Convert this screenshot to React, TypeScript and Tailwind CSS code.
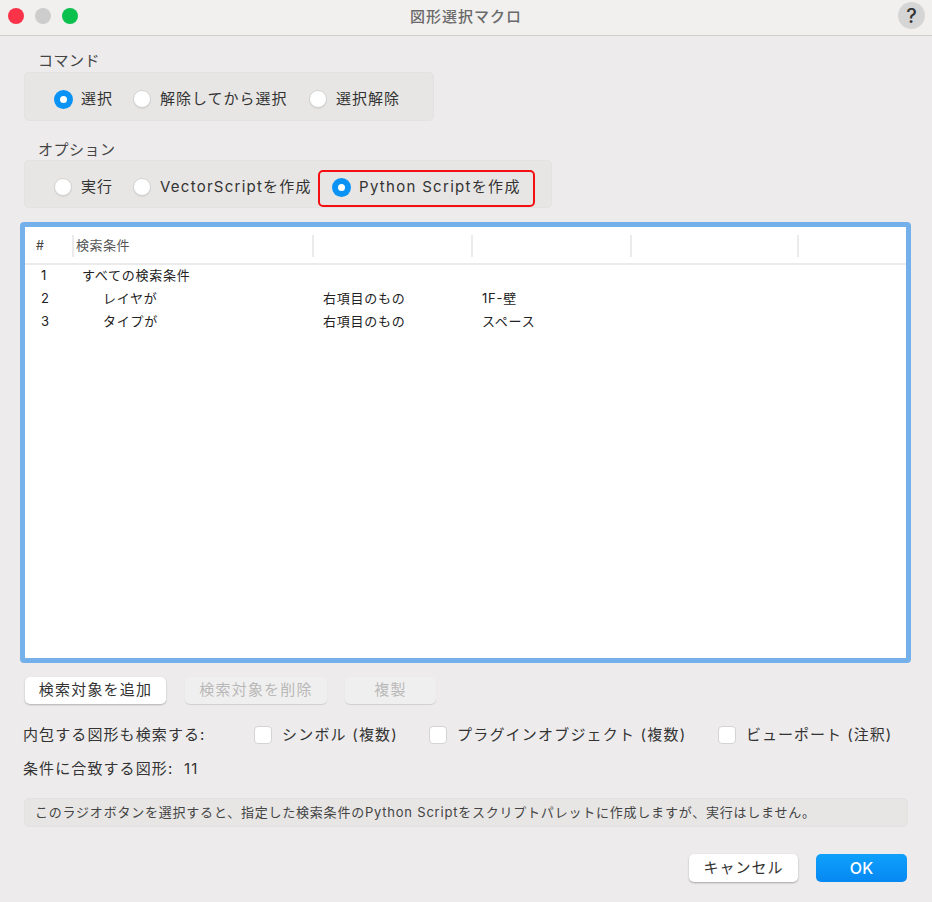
const fontStack = 'font-["Inter","Noto_Sans_CJK_JP",sans-serif]'

function Radio({ label, checked, className = '' }: { label: string; checked?: boolean; className?: string }) {
  return (
    <label className={`flex items-center gap-[8px] text-[15px] leading-5 tracking-[1px] text-[#333] ${className}`}>
      {checked ? (
        <span className="flex h-[19px] w-[19px] shrink-0 items-center justify-center rounded-full bg-[#0a93f5]">
          <span className="h-[7px] w-[7px] rounded-full bg-white" />
        </span>
      ) : (
        <span className="mr-[1px] h-[18px] w-[18px] shrink-0 rounded-full border border-[#d4d3d3] bg-white shadow-[0_1px_1px_rgba(0,0,0,0.08)]" />
      )}
      <span className="whitespace-nowrap">{label}</span>
    </label>
  )
}

function Checkbox({ label, className = '' }: { label: string; className?: string }) {
  return (
    <label className={`flex items-center gap-[10px] text-[15px] leading-5 tracking-[1px] text-[#333] ${className}`}>
      <span className="h-[18px] w-[18px] shrink-0 rounded-[4px] border border-[#d4d3d3] bg-white" />
      <span className="whitespace-nowrap">{label}</span>
    </label>
  )
}

function GroupBox({ children, className = '' }: { children: React.ReactNode; className?: string }) {
  return (
    <div className={`flex items-center rounded-[5px] border border-[#e3e2e2] bg-[#e7e6e5] ${className}`}>{children}</div>
  )
}

function HeaderCell({ label, className = '' }: { label?: string; className?: string }) {
  return (
    <div className={`flex h-[22px] shrink-0 items-center border-l-2 border-[#ebebeb] pl-[2px] text-[13px] tracking-[0.5px] text-[#555] ${className}`}>
      {label}
    </div>
  )
}

const rows = [
  { no: '1', name: 'すべての検索条件', indent: 'pl-[9px]', op: '', value: '' },
  { no: '2', name: 'レイヤが', indent: 'pl-[30px]', op: '右項目のもの', value: '1F-壁' },
  { no: '3', name: 'タイプが', indent: 'pl-[30px]', op: '右項目のもの', value: 'スペース' },
]

function ConditionTable() {
  return (
    <div className="ml-[20px] mr-[21px] mt-[14px] h-[441px] rounded-[4px] border-[5px] border-[#74b0ea] bg-white">
      <div className="flex h-[38px] items-start border-b-2 border-[#ebebeb] pt-[8px]">
        <div className="w-[47px] shrink-0 pl-[11px] text-[12.5px] leading-[22px] text-[#444]">#</div>
        <HeaderCell label="検索条件" className="w-[240px]" />
        <HeaderCell className="w-[159px]" />
        <HeaderCell className="w-[159px]" />
        <HeaderCell className="w-[167px]" />
        <HeaderCell className="w-[40px]" />
      </div>
      <div>
        {rows.map((row) => (
          <div key={row.no} className="flex h-[23px] items-center pb-[2px] text-[13px] tracking-[0.75px] text-[#222]">
            <div className="w-[48px] shrink-0 pl-[16px]">{row.no}</div>
            <div className={`w-[250px] shrink-0 ${row.indent}`}>{row.name}</div>
            <div className="w-[159px] shrink-0">{row.op}</div>
            <div className="shrink-0">{row.value}</div>
          </div>
        ))}
      </div>
    </div>
  )
}

export default function App() {
  return (
    <div className={`h-[902px] w-[932px] overflow-hidden bg-[#edebec] ${fontStack}`}>
      {/* Title bar */}
      <div className="relative flex h-[36px] items-center justify-center border-b border-[#cfcecc] bg-[#f1f0ef]">
        <div className="absolute left-[8px] top-[8px] flex gap-[11px]">
          <span className="h-[16px] w-[16px] rounded-full bg-[#fb3349]" />
          <span className="h-[16px] w-[16px] rounded-full bg-[#cecdcd]" />
          <span className="h-[16px] w-[16px] rounded-full bg-[#0cc04e]" />
        </div>
        <span className="text-[15px] font-medium tracking-[1px] text-[#6a6a6a]">図形選択マクロ</span>
        <span className="absolute right-[7px] top-[2px] flex h-[27px] w-[27px] items-center justify-center rounded-full bg-[#d6d5d5] text-[20px] font-medium text-[#333]">
          ?
        </span>
      </div>

      {/* Command */}
      <div className="px-[24px] pt-[15px]">
        <div className="pl-[14px] text-[15px] leading-5 tracking-[0.5px] text-[#444]">コマンド</div>
        <GroupBox className="mt-[1px] h-[49px] w-[410px] pl-[29px] pt-[5px]">
          <Radio label="選択" checked className="w-[79px]" />
          <Radio label="解除してから選択" className="w-[176px]" />
          <Radio label="選択解除" />
        </GroupBox>
      </div>

      {/* Options */}
      <div className="px-[24px] pt-[19px]">
        <div className="pl-[14px] text-[15px] leading-5 tracking-[0.5px] text-[#444]">オプション</div>
        <GroupBox className="h-[48px] w-[528px] pl-[29px] pt-[6px]">
          <Radio label="実行" className="w-[79px]" />
          <Radio label="VectorScriptを作成" className="w-[185px] !tracking-[1.25px]" />
          <div className="mt-[3px] flex h-[37px] w-[217px] items-center rounded-[5px] border-2 border-[#f50f12] pb-[3px] pl-[12px]">
            <Radio label="Python Scriptを作成" checked className="!tracking-[1.3px]" />
          </div>
        </GroupBox>
      </div>

      <ConditionTable />

      {/* Table buttons */}
      <div className="mt-[14px] flex px-[25px]">
        <button className="h-[27px] w-[141px] rounded-[5px] bg-white text-[15px] tracking-[1.2px] text-[#333] shadow-[0_1px_2px_rgba(0,0,0,0.25)]">
          検索対象を追加
        </button>
        <button className="ml-[19px] h-[27px] w-[142px] rounded-[5px] bg-[#f0efef] text-[15px] tracking-[1.2px] text-[#b9b8b8] shadow-[0_1px_1px_rgba(0,0,0,0.12)]">
          検索対象を削除
        </button>
        <button className="ml-[18px] h-[27px] w-[91px] rounded-[5px] bg-[#f0efef] text-[15px] tracking-[1.2px] text-[#b9b8b8] shadow-[0_1px_1px_rgba(0,0,0,0.12)]">
          複製
        </button>
      </div>

      {/* Include options */}
      <div className="mt-[21px] flex h-[20px] items-center pl-[23px]">
        <span className="w-[231px] whitespace-nowrap text-[15px] tracking-[1.1px] text-[#333]">内包する図形も検索する:</span>
        <Checkbox label="シンボル (複数)" className="w-[175px] !tracking-[1.2px]" />
        <Checkbox label="プラグインオブジェクト (複数)" className="w-[289px] !tracking-[1.2px]" />
        <Checkbox label="ビューポート (注釈)" className="gap-[9px]" />
      </div>

      <div className="mt-[14px] pl-[23px] text-[15px] leading-5 tracking-[1.1px] text-[#333]">条件に合致する図形:&nbsp;&nbsp;11</div>

      {/* Help text */}
      <div className="mx-[24px] mt-[19px] flex h-[29px] items-center rounded-[5px] border border-[#e3e2e2] bg-[#e7e6e5] pl-[10px] text-[13px] tracking-[0.78px] text-[#444]">
        このラジオボタンを選択すると、指定した検索条件のPython Scriptをスクリプトパレットに作成しますが、実行はしません。
      </div>

      {/* Dialog buttons */}
      <div className="mt-[27px] flex justify-end gap-[18px] pr-[25px]">
        <button className="h-[28px] w-[109px] rounded-[5px] bg-white text-[15px] tracking-[1px] text-[#333] shadow-[0_1px_2px_rgba(0,0,0,0.3)]">
          キャンセル
        </button>
        <button className="h-[28px] w-[91px] rounded-[5px] bg-gradient-to-b from-[#10a0fb] to-[#0788f3] text-[16px] font-medium text-white">
          OK
        </button>
      </div>
    </div>
  )
}
